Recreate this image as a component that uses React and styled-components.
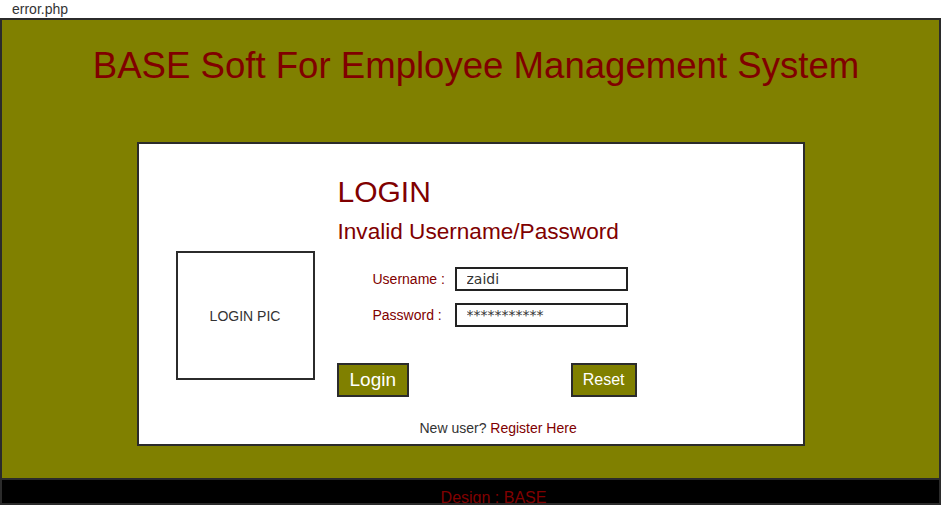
import styled, { createGlobalStyle } from "styled-components";

const Global = createGlobalStyle`
  body {
    margin: 0;
    background: #fff;
    font-family: "Liberation Sans", Arial, sans-serif;
  }
`;

const Page = styled.div`
  width: 941px;
`;

const FileBar = styled.div`
  height: 18px;
  line-height: 18px;
  padding-left: 12px;
  font-size: 14px;
  color: #333;
`;

const Main = styled.main`
  background: #808000;
  border: 2px solid #2b2b2b;
  border-bottom: none;
  padding: 25px 0 32px;
`;

const Title = styled.h1`
  margin: 0 0 55px;
  padding-left: 11px;
  text-align: center;
  font-size: 36.6px;
  line-height: 42px;
  font-weight: normal;
  color: #800000;
`;

const Card = styled.section`
  width: 627px;
  height: 300px;
  margin: 0 auto;
  background: #fff;
  border: 2px solid #2b2b2b;
  display: flex;
  padding-left: 37px;
`;

const Pic = styled.div`
  width: 135px;
  height: 125px;
  margin-top: 107px;
  border: 2px solid #2b2b2b;
  display: flex;
  align-items: center;
  justify-content: center;
  font-size: 14px;
  color: #333;
`;

const Form = styled.div`
  width: 300px;
  margin-left: 23px;
  padding-top: 31px;
  display: flex;
  flex-direction: column;
`;

const Heading = styled.h2`
  margin: 0;
  font-size: 30px;
  line-height: 34px;
  font-weight: normal;
  color: #800000;
`;

const Error = styled.h3`
  margin: 10px 0 22px;
  font-size: 22.6px;
  line-height: 26px;
  font-weight: normal;
  color: #800000;
`;

const Row = styled.label`
  display: flex;
  align-items: center;
  margin-bottom: ${(p) => p.$gap}px;
`;

const Label = styled.span`
  width: 82px;
  padding-left: 35px;
  font-size: 14px;
  color: #800000;
`;

const Input = styled.input`
  width: 173px;
  height: 24px;
  box-sizing: border-box;
  border: 2px solid #222;
  padding: 0 0 0 10px;
  margin: 0;
  font-family: "DejaVu Sans", sans-serif;
  font-size: 14px;
  color: #333;
  background: #fff;
  outline: none;
`;

const Buttons = styled.div`
  display: flex;
  justify-content: space-between;
  align-items: flex-start;
  margin-left: -1px;
  padding-right: 1px;
`;

const Button = styled.button`
  height: 34px;
  box-sizing: border-box;
  border: 2px solid #2b2b2b;
  background: #808000;
  color: #fff;
  font-family: "Liberation Sans", Arial, sans-serif;
  font-size: ${(p) => p.$size}px;
  padding: 0 ${(p) => p.$pad}px;
  margin: 0;
`;

const Register = styled.p`
  margin: 23px 0 0;
  padding-left: 82px;
  font-size: 14px;
  line-height: 16px;
  color: #333;

  a {
    color: #800000;
    text-decoration: none;
  }
`;

const Footer = styled.footer`
  height: 23px;
  overflow: hidden;
  background: #000;
  border: 2px solid #2b2b2b;
  padding-left: 46px;
  text-align: center;
  font-size: 16px;
  line-height: 18px;
`;

const FooterText = styled.div`
  padding-top: 9px;
  color: #800000;
`;

export default function App() {
  return (
    <Page>
      <Global />
      <FileBar>error.php</FileBar>
      <Main>
        <Title>BASE Soft For Employee Management System</Title>
        <Card>
          <Pic>LOGIN PIC</Pic>
          <Form>
            <Heading>LOGIN</Heading>
            <Error>Invalid Username/Password</Error>
            <Row $gap={12}>
              <Label>Username :</Label>
              <Input type="text" defaultValue="zaidi" />
            </Row>
            <Row $gap={36}>
              <Label>Password :</Label>
              <Input type="text" defaultValue="***********" />
            </Row>
            <Buttons>
              <Button $size={19} $pad={11}>Login</Button>
              <Button $size={16} $pad={10}>Reset</Button>
            </Buttons>
            <Register>
              New user? <a href="#register">Register Here</a>
            </Register>
          </Form>
        </Card>
      </Main>
      <Footer>
        <FooterText>Design : BASE</FooterText>
      </Footer>
    </Page>
  );
}
